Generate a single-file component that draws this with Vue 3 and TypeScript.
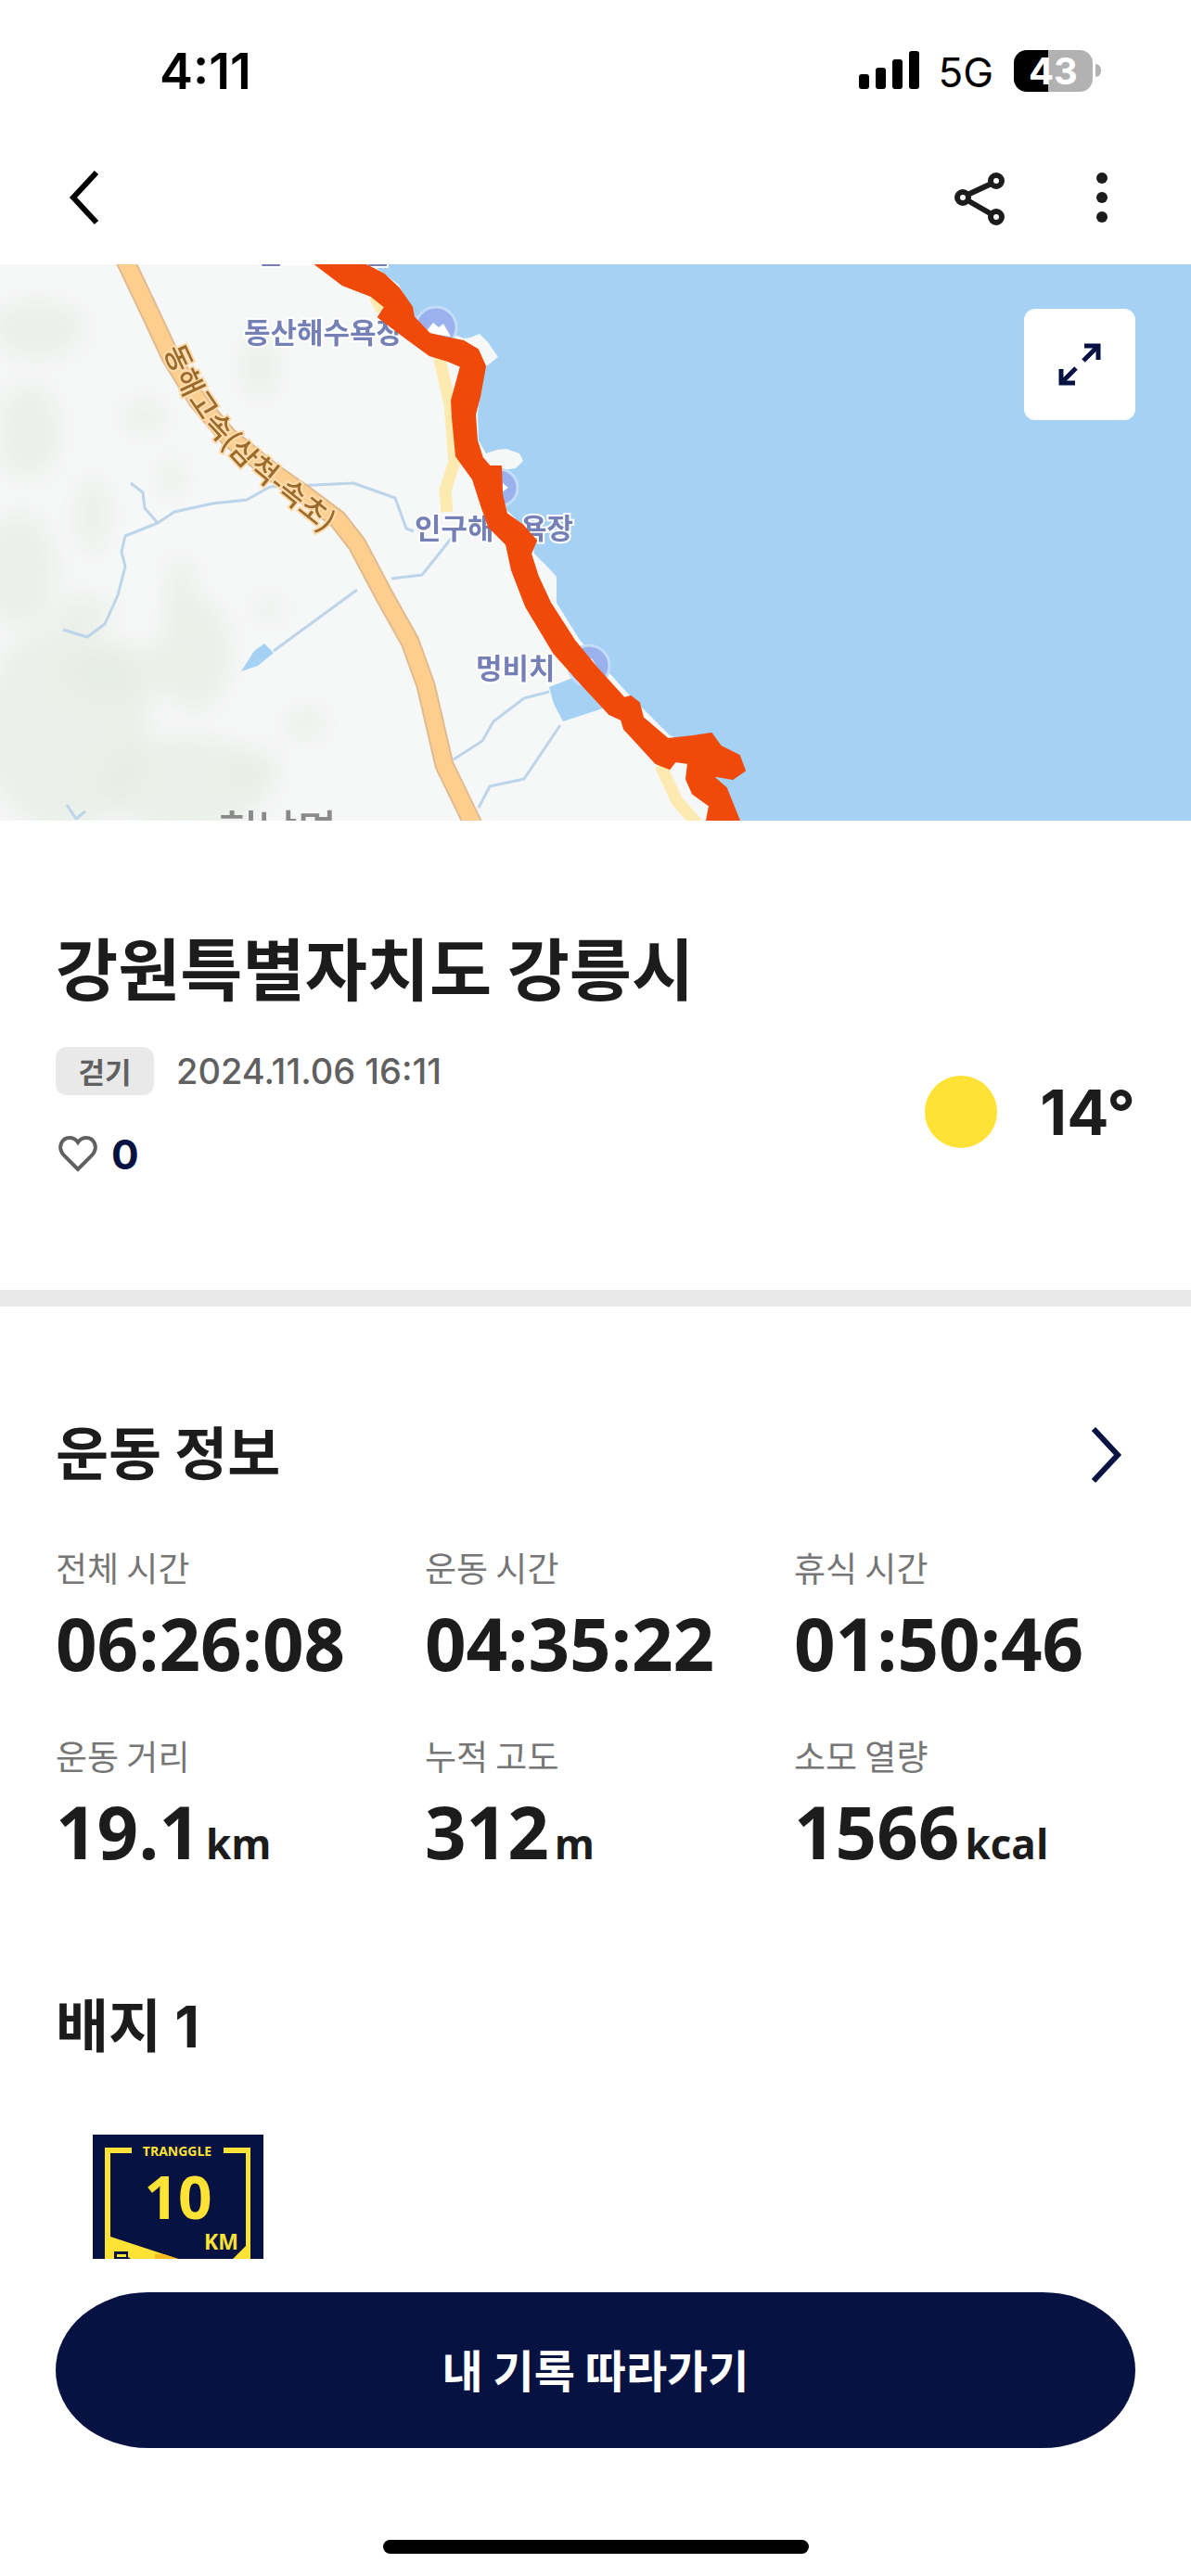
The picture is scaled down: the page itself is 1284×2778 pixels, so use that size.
<script setup lang="ts">
interface Stat {
  label: string
  value: string
  unit?: string
}

const stats: Stat[] = [
  { label: '전체 시간', value: '06:26:08' },
  { label: '운동 시간', value: '04:35:22' },
  { label: '휴식 시간', value: '01:50:46' },
  { label: '운동 거리', value: '19.1', unit: 'km' },
  { label: '누적 고도', value: '312', unit: 'm' },
  { label: '소모 열량', value: '1566', unit: 'kcal' },
]

interface Blob {
  x: number
  y: number
  rx: number
  ry: number
}

// Wooded areas of the terrain layer
const woods: Blob[] = [
  { x: 20, y: 330, rx: 40, ry: 60 },
  { x: 30, y: 180, rx: 34, ry: 50 },
  { x: 40, y: 70, rx: 50, ry: 30 },
  { x: 155, y: 165, rx: 22, ry: 16 },
  { x: 280, y: 110, rx: 18, ry: 34 },
  { x: 100, y: 270, rx: 16, ry: 40 },
  { x: 185, y: 230, rx: 12, ry: 20 },
  { x: 70, y: 500, rx: 90, ry: 110 },
  { x: 210, y: 420, rx: 38, ry: 60 },
  { x: 130, y: 440, rx: 60, ry: 30 },
  { x: 200, y: 560, rx: 90, ry: 50 },
  { x: 275, y: 545, rx: 26, ry: 20 },
  { x: 330, y: 495, rx: 20, ry: 16 },
  { x: 195, y: 350, rx: 14, ry: 34 },
  { x: 90, y: 375, rx: 34, ry: 16 },
  { x: 290, y: 372, rx: 14, ry: 12 },
]
</script>

<template>
  <div class="screen">
    <div class="status">
      <span class="clock">4:11</span>
      <div class="signals">
        <svg class="bars" viewBox="0 0 65 42" aria-hidden="true">
          <rect x="0" y="25" width="11" height="16" rx="3" />
          <rect x="18" y="18" width="11" height="23" rx="3" />
          <rect x="36" y="9" width="11" height="32" rx="3" />
          <rect x="54" y="0" width="11" height="41" rx="3" />
        </svg>
        <span class="network">5G</span>
        <span class="battery">43</span>
        <span class="nub"></span>
      </div>
    </div>

    <header class="bar">
      <button class="icon-button" type="button" aria-label="뒤로">
        <svg width="60" height="60" viewBox="0 0 60 60">
          <path d="M44 3 19 30l25 27" fill="none" stroke="#000" stroke-width="6" />
        </svg>
      </button>
      <div class="actions">
        <button class="icon-button" type="button" aria-label="공유">
          <svg width="60" height="60" viewBox="0 0 60 60">
            <g fill="none" stroke="#1c1c1c" stroke-width="6">
              <circle cx="12" cy="30" r="6" />
              <circle cx="48" cy="12" r="6" />
              <circle cx="48" cy="51" r="6" />
              <path d="m17 27 26-12M17 33l26 15" />
            </g>
          </svg>
        </button>
        <button class="icon-button" type="button" aria-label="더보기">
          <svg width="60" height="60" viewBox="0 0 60 60" fill="#1c1c1c">
            <circle cx="30" cy="9" r="6" />
            <circle cx="30" cy="30" r="6" />
            <circle cx="30" cy="51" r="6" />
          </svg>
        </button>
      </div>
    </header>

    <main class="content">
      <section class="map">
        <svg class="map-art" viewBox="0 0 1284 600" preserveAspectRatio="xMidYMid slice" role="img" aria-label="이동 경로 지도">
          <defs>
            <filter id="soft" x="-20%" y="-20%" width="140%" height="140%">
              <feGaussianBlur stdDeviation="12" />
            </filter>
            <path id="highway-label" d="M187 88 207 131 236 174 266 206 304 237 344 269 388 308" />
          </defs>
          <rect width="1284" height="600" fill="#a5d2f4" />
          <path
            fill="#f6f7f7"
            d="M0 0H400L430 22 446 57 500 80 507 79 517 75 526 84 537 100 527 108 521 112 515 162 516 190 524 204 536 200 546 199 560 204 564 212 556 220 541 222 546 265 572 290 576 312 590 326 600 337 600 365 625 405 676 462 696 482 722 508 760 525 780 600H0Z"
          />
          <g fill="#e5ede2" filter="url(#soft)">
            <ellipse v-for="(wood, i) in woods" :key="i" :cx="wood.x" :cy="wood.y" :rx="wood.rx" :ry="wood.ry" opacity="0.7" />
          </g>
          <path fill="#a5d2f4" d="M592 456 620 445 650 479 607 493 597 474Z" />
          <path fill="#a5d2f4" d="M260 439 274 417 285 409 295 419 278 433Z" />
          <g fill="none" stroke="#bcd5ea" stroke-width="3" stroke-linejoin="round">
            <path d="M141 236 154 246 156 263 170 279 135 293 131 310 135 326 127 357 113 388 94 402 68 394" />
            <path d="M170 279 188 267 229 258 266 254 291 240 340 238 381 236 426 252 438 285 446 288" />
            <path d="M487 295 455 335 422 339M385 351 355 373 295 417" />
            <path d="M592 461 565 468 532 493 520 514 489 534" />
            <path d="M604 497 565 555 528 563 516 586M72 583 82 598 92 590" />
          </g>
          <g fill="none" stroke="#fdeab0" stroke-width="13" stroke-linejoin="round">
            <path d="M473 98 485 151 490 213 480 244 482 267M404 34 412 50M712 540 730 579 752 604" />
          </g>
          <g fill="none" stroke-linejoin="round">
            <path d="M135 -4 164 57 184 100 213 147 246 186 295 225 328 248 364 275 385 302 414 357 442 407 459 454 479 540 510 604" stroke="#e0bb90" stroke-width="21" />
            <path d="M135 -4 164 57 184 100 213 147 246 186 295 225 328 248 364 275 385 302 414 357 442 407 459 454 479 540 510 604" stroke="#fdce8d" stroke-width="17" />
          </g>
          <g fill="#9bb1ee" stroke="#c5dcf8" stroke-width="3">
            <circle cx="470" cy="68" r="22" />
            <circle cx="538" cy="241" r="20" />
            <circle cx="635" cy="433" r="22" />
          </g>
          <path fill="#fff" d="m458 74 9-11 6 5 5-4 8 14ZM542 236l6 5-6 4ZM633 428l5-3 6 10Z" />
          <g class="place">
            <text x="277" y="-1">잔교리해변</text>
            <text x="263" y="85">동산해수욕장</text>
            <text x="447" y="296">인구해수욕장</text>
            <text x="513" y="447">멍비치</text>
          </g>
          <text class="town" x="236" y="627">현남면</text>
          <text class="road" dy="12"><textPath href="#highway-label">동해고속(삼척-속초)</textPath></text>
          <path
            fill="#f04a0a"
            stroke="#f04a0a"
            stroke-width="2"
            stroke-linejoin="round"
            d="M393 0 414 11 430 26 444 46 446 57 463 75 480 79 500 83 515 92 523 110 517 143 512 162 514 190 520 209 528 218 540 218 541 248 546 269 563 281 578 298 572 312 580 337 593 365 620 407 643 435 673 468 680 466 689 473 693 489 720 512 747 509 767 506 777 520 797 530 803 546 790 555 767 551 783 565 797 600H762L765 584 747 571 740 555 742 538 728 536 722 544 707 538 673 501 670 491 657 485 630 456 597 419 567 369 552 330 546 302 527 283 520 263 510 232 492 207 488 166 487 147 497 110 483 104 463 98 437 79 408 57 415 46 400 34 369 22 340 0Z"
          />
        </svg>
        <button class="expand" type="button" aria-label="지도 확대">
          <svg width="60" height="60" viewBox="0 0 60 60" fill="none" stroke="#061242">
            <path d="M35 10H50V25M10 35V50H25" stroke-width="5" />
            <path d="M34 26 49 11M26 34 11 49" stroke-width="5" />
          </svg>
        </button>
      </section>

      <section class="summary">
        <h1>강원특별자치도 강릉시</h1>
        <div class="summary-row">
          <div class="details">
            <div class="meta">
              <span class="tag">걷기</span>
              <time datetime="2024-11-06T16:11">2024.11.06 16:11</time>
            </div>
            <button class="like" type="button" aria-label="좋아요 0">
              <svg width="48" height="48" viewBox="0 0 48 48" fill="none" stroke="#606060" stroke-width="4">
                <path d="M24 40 9 25C1 16 7 6 15 6c4 0 7 2 9 5 2-3 5-5 9-5 8 0 14 10 6 19Z" />
              </svg>
              <span>0</span>
            </button>
          </div>
          <div class="weather">
            <span class="sun"></span>
            <span>14°</span>
          </div>
        </div>
      </section>

      <section class="workout">
        <div class="section-head">
          <h2>운동 정보</h2>
          <a href="#workout" aria-label="운동 정보 상세">
            <svg width="60" height="78" viewBox="0 0 60 78">
              <path d="M15 11 41 39 15 67" fill="none" stroke="#061242" stroke-width="6" />
            </svg>
          </a>
        </div>
        <dl class="stats">
          <div v-for="stat in stats" :key="stat.label">
            <dt>{{ stat.label }}</dt>
            <dd>{{ stat.value }}<span v-if="stat.unit" class="unit">{{ stat.unit }}</span></dd>
          </div>
        </dl>
      </section>

      <section class="badges">
        <h2>배지 <span class="count">1</span></h2>
        <svg class="badge" width="184" height="240" viewBox="0 0 184 240" role="img" aria-label="10 KM 배지">
          <rect width="184" height="240" fill="#061242" />
          <path fill="#ffe236" d="M13 14H42V20H19V110L95 135 150 135 165 120V20H141V14H170V220H13Z" />
          <path fill="#061242" d="M94 135H150L130 156ZM23 126H38V132L44 136V160H23Z" />
          <path fill="#ffe236" d="M26 129H36V132H26ZM26 134H36V136H26Z" />
          <path fill="#fbb91f" d="M67 129H77L95 135 120 160H67Z" />
          <g class="badge-text" fill="#ffe236">
            <text x="91" y="23" font-size="14" text-anchor="middle">TRANGGLE</text>
            <text x="92" y="91" font-size="64" text-anchor="middle">10</text>
            <text x="157" y="124" font-size="23" text-anchor="end">KM</text>
          </g>
        </svg>
      </section>
    </main>

    <footer class="dock">
      <button class="follow" type="button">내 기록 따라가기</button>
      <span class="home-indicator"></span>
    </footer>
  </div>
</template>

<style>
body {
  background: #fff;
}
</style>

<style scoped>
.screen {
  display: flex;
  flex-direction: column;
  height: 100vh;
  color: #1c1c1c;
  background: #fff;
  font-family: 'Noto Sans CJK KR', sans-serif;
}

button {
  padding: 0;
  border: 0;
  background: none;
  color: inherit;
  font: inherit;
}

svg {
  display: block;
}

h1,
h2,
dl,
dd {
  margin: 0;
}

.status {
  display: flex;
  flex: none;
  justify-content: space-between;
  align-items: center;
  height: 152px;
  padding: 0 97px 0 172px;
  color: #000;
  font-family: Inter, sans-serif;
}

.clock {
  font-size: 54px;
  font-weight: 600;
}

.signals {
  display: flex;
  align-items: center;
}

.bars {
  width: 65px;
  height: 42px;
}

.network {
  margin: 4px 22px 0 20px;
  font-size: 44px;
}

.battery {
  width: 85px;
  border-radius: 14px;
  background: linear-gradient(to right, #000 37px, #b2b2b2 37px);
  color: #fff;
  font-size: 40px;
  font-weight: 700;
  line-height: 45px;
  text-align: center;
}

.nub {
  width: 6px;
  height: 14px;
  margin-left: 3px;
  border-radius: 0 6px 6px 0;
  background: #b2b2b2;
}

.bar {
  display: flex;
  flex: none;
  justify-content: space-between;
  align-items: center;
  height: 133px;
  padding: 0 66px 12px 60px;
  box-sizing: border-box;
}

.actions {
  display: flex;
  gap: 72px;
}

.content {
  flex: 1;
  min-height: 0;
  overflow: hidden;
}

.map {
  position: relative;
  height: 600px;
}

.map-art {
  width: 100%;
  height: 100%;
}

.place {
  fill: #7480b6;
  stroke: #fff;
  stroke-width: 4px;
  paint-order: stroke;
  font-size: 31px;
  font-weight: 700;
}

.town {
  fill: #8a8a8a;
  font-size: 46px;
  font-weight: 500;
}

.road {
  fill: #9c6a2b;
  stroke: #fddcae;
  stroke-width: 4px;
  paint-order: stroke;
  font-size: 31px;
  font-weight: 500;
}

.expand {
  position: absolute;
  top: 48px;
  right: 60px;
  display: grid;
  place-items: center;
  width: 120px;
  height: 120px;
  border-radius: 12px;
  background: #fff;
}

.summary {
  padding: 108px 60px 122px;
  border-bottom: 18px solid #e9e9e9;
}

h1 {
  margin-bottom: 40px;
  font-size: 73px;
  font-weight: 700;
  line-height: 96px;
}

.summary-row {
  display: flex;
  justify-content: space-between;
  align-items: center;
}

.meta {
  display: flex;
  align-items: center;
  gap: 24px;
  margin-bottom: 40px;
  color: #606060;
}

.tag {
  width: 106px;
  border-radius: 12px;
  background: #e9e9e9;
  font-size: 31px;
  font-weight: 700;
  line-height: 52px;
  text-align: center;
}

time {
  font-family: Inter, sans-serif;
  font-size: 38px;
  font-weight: 500;
  line-height: 52px;
}

.like {
  display: flex;
  align-items: center;
  gap: 12px;
  color: #061242;
  font-family: Inter, sans-serif;
  font-size: 44px;
  font-weight: 700;
  line-height: 48px;
}

.weather {
  display: flex;
  align-items: center;
  gap: 46px;
  font-family: Inter, sans-serif;
  font-size: 67px;
  font-weight: 700;
}

.sun {
  width: 78px;
  height: 78px;
  border-radius: 50%;
  background: #ffe236;
}

.workout {
  padding: 111px 60px 0;
}

.section-head {
  display: flex;
  justify-content: space-between;
  align-items: flex-end;
  margin-bottom: 58px;
}

h2 {
  font-size: 62px;
  font-weight: 700;
  line-height: 88px;
}

.stats {
  display: grid;
  grid-template-columns: repeat(3, 1fr);
  gap: 53px 30px;
}

dt {
  margin-bottom: 14px;
  color: #767676;
  font-size: 37px;
  line-height: 48px;
}

dd {
  font-family: 'Open Sans', sans-serif;
  font-size: 78px;
  font-weight: 700;
  line-height: 88px;
}

.unit {
  margin-left: 6px;
  font-size: 44px;
  line-height: 48px;
}

.badges {
  padding: 118px 60px 0;
}

.count {
  font-family: Inter, sans-serif;
}

.badge {
  margin: 72px 0 0 40px;
}

.badge-text {
  font-family: 'Open Sans', sans-serif;
  font-weight: 700;
}

.dock {
  display: flex;
  flex: none;
  flex-direction: column;
  align-items: center;
  padding: 36px 60px 24px;
}

.follow {
  width: 100%;
  margin-bottom: 99px;
  padding-bottom: 4px;
  border-radius: 100px / 84px;
  background: #061242;
  color: #fff;
  font-size: 48px;
  font-weight: 700;
  line-height: 164px;
}

.home-indicator {
  width: 459px;
  height: 15px;
  border-radius: 8px;
  background: #000;
}
</style>
